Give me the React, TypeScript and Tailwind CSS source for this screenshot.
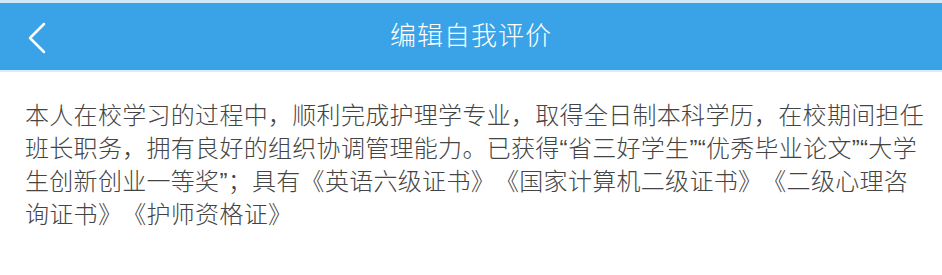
const lines = [
    "本人在校学习的过程中，顺利完成护理学专业，取得全日制本科学历，在校期间担任",
    "班长职务，拥有良好的组织协调管理能力。已获得“省三好学生”“优秀毕业论文”“大学",
    "生创新创业一等奖”；具有《英语六级证书》《国家计算机二级证书》《二级心理咨",
    "询证书》《护师资格证》",
];

export default function App() {
    return (
        <div className="h-[275px] w-[942px] overflow-hidden bg-white font-['Liberation_Sans','Noto_Sans_CJK_SC',sans-serif] [text-spacing-trim:space-all]">
            <div className="h-[3px] bg-[#cfe9fa]" />
            <header className="relative flex h-[67px] items-center justify-center bg-[#3aa3e8]">
                <button className="absolute left-[22px] top-[18px] text-white" aria-label="back">
                    <svg width="26" height="34" viewBox="0 0 26 34" fill="none">
                        <path d="M22 3 L8 17 L22 31" stroke="white" strokeWidth="2.5" strokeLinecap="round" strokeLinejoin="round" />
                    </svg>
                </button>
                <h1 className="text-[26px] font-light tracking-[1px] text-white">编辑自我评价</h1>
            </header>
            <div className="h-[2px] bg-[#d9eefb]" />
            <section className="px-[25px] pt-[27px] text-[24px] font-light leading-[33px] tracking-[0.3px] text-[#444]">
                {lines.map((line) => (
                    <p key={line} className="whitespace-nowrap">
                        {line}
                    </p>
                ))}
            </section>
        </div>
    );
}
